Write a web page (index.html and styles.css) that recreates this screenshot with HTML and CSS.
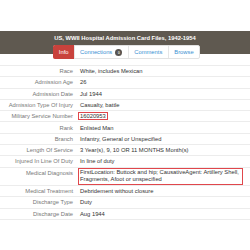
FILE: index.html
```html
<!DOCTYPE html>
<html lang="en">
<head>
    <meta charset="UTF-8">
    <meta name="viewport" content="width=device-width, initial-scale=1.0">
    <title>US, WWII Hospital Admission Card Files</title>
    <link rel="stylesheet" href="styles.css">
</head>
<body>
    <div class="record-header">
        <h1 class="record-title">US, WWII Hospital Admission Card Files, 1942-1954</h1>
    </div>

    <div class="tab-row">
        <div class="tabs">
            <a class="tab active">Info</a>
            <a class="tab">Connections <span class="badge">0</span></a>
            <a class="tab">Comments</a>
            <a class="tab">Browse</a>
        </div>
    </div>

    <table class="facts">
        <tr><td class="label">Race</td><td class="value">White, includes Mexican</td></tr>
        <tr><td class="label">Admission Age</td><td class="value">26</td></tr>
        <tr><td class="label">Admission Date</td><td class="value">Jul 1944</td></tr>
        <tr><td class="label">Admission Type Of Injury</td><td class="value">Casualty, battle</td></tr>
        <tr><td class="label">Military Service Number</td><td class="value"><span class="mark">16020953</span></td></tr>
        <tr><td class="label">Rank</td><td class="value">Enlisted Man</td></tr>
        <tr><td class="label">Branch</td><td class="value">Infantry, General or Unspecified</td></tr>
        <tr><td class="label">Length Of Service</td><td class="value">3 Year(s), 9, 10 OR 11 MONTHS Month(s)</td></tr>
        <tr><td class="label">Injured In Line Of Duty</td><td class="value">In line of duty</td></tr>
        <tr><td class="label">Medical Diagnosis</td><td class="value"><div class="mark block">FirstLocation: Buttock and hip; CausativeAgent: Artillery Shell, Fragments, Afoot or unspecified</div></td></tr>
        <tr><td class="label">Medical Treatment</td><td class="value">Debridement without closure</td></tr>
        <tr><td class="label">Discharge Type</td><td class="value">Duty</td></tr>
        <tr><td class="label">Discharge Date</td><td class="value">Aug 1944</td></tr>
    </table>
</body>
</html>
```

FILE: styles.css
```css
* {
    margin: 0;
    padding: 0;
    box-sizing: border-box;
}

body {
    font-family: "Liberation Sans", Arial, sans-serif;
    font-size: 5.8px;
    background: #fff;
    color: #333;
    padding-top: 31px;
}

.record-header {
    background: #5f5950;
    height: 23px;
    padding-top: 4px;
    text-align: center;
}

.record-title {
    color: #fff;
    font-size: 5.8px;
    font-weight: bold;
    line-height: 7px;
}

.tab-row {
    display: flex;
    justify-content: center;
    margin-top: -9px;
    padding-left: 3px;
}

.tabs {
    display: flex;
    background: #fff;
    border: 1px solid #e2e2e2;
    border-radius: 2px;
    height: 14px;
}

.tab {
    display: flex;
    align-items: center;
    gap: 3px;
    padding: 0 5.5px;
    color: #3a8fd2;
    border-left: 1px solid #e6e6e6;
}

.tab:first-child {
    border-left: none;
}

.tab.active {
    background: #c9423c;
    color: #fff;
    margin: -1px 0 -1px -1px;
    border-radius: 2px 0 0 2px;
    padding: 0 5px 0 6px;
}

.badge {
    display: inline-flex;
    align-items: center;
    justify-content: center;
    width: 7px;
    height: 7px;
    border-radius: 50%;
    background: #58544f;
    color: #ddd;
    font-size: 4px;
    font-weight: bold;
}

.facts {
    width: 100%;
    border-collapse: collapse;
    margin-top: 6px;
}

.facts td {
    border-top: 1px solid #ececec;
    border-bottom: 1px solid #ececec;
    padding: 1.15px 0;
    line-height: 8px;
    vertical-align: top;
}

.label {
    width: 77px;
    text-align: right;
    color: #777;
    padding-right: 4px !important;
    white-space: nowrap;
}

.value {
    padding-left: 3px !important;
    padding-right: 7px !important;
    color: #333;
}

.mark {
    border: 1px solid #e0474c;
    padding: 0 1px;
    margin-left: -2px;
}

.mark.block {
    display: block;
    line-height: 7.6px;
    margin-top: -1px;
    margin-bottom: -1px;
}
```
